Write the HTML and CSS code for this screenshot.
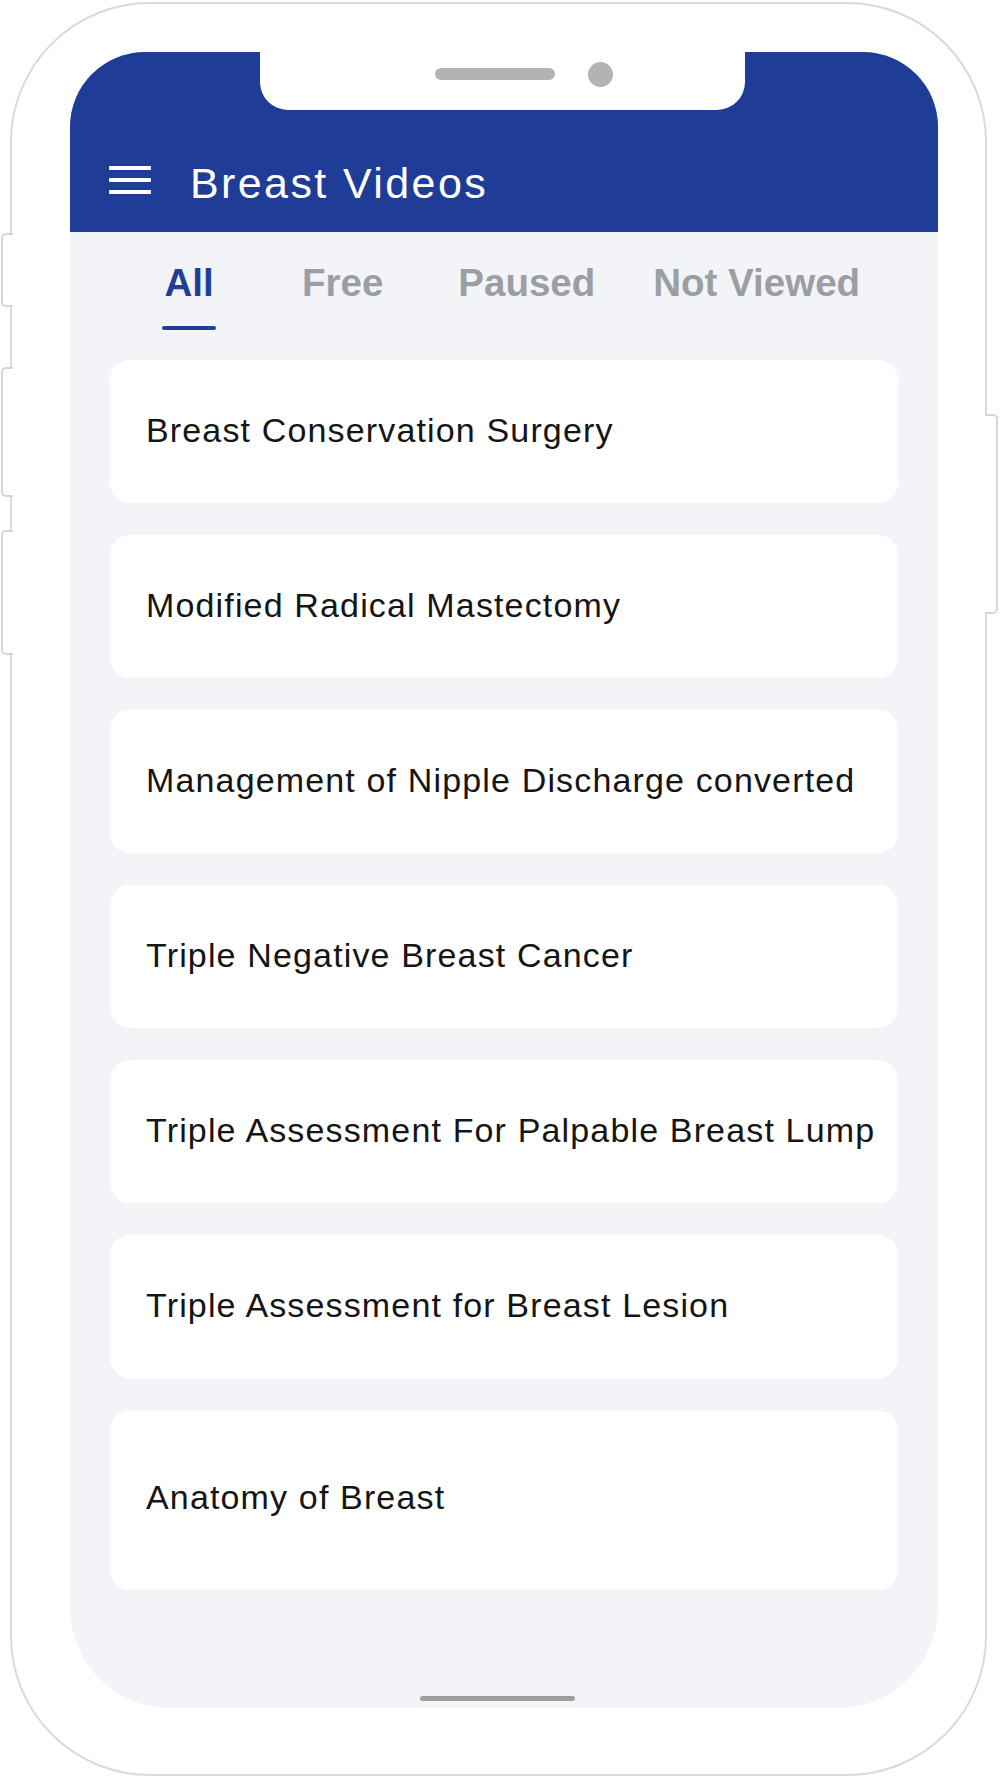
FILE: index.html
```html
<!DOCTYPE html>
<html lang="en">
<head>
<meta charset="utf-8">
<title>Breast Videos</title>
<link rel="stylesheet" href="styles.css">
</head>
<body>
<div class="phone">
  <div class="side-btn btn-l1"></div>
  <div class="side-btn btn-l2"></div>
  <div class="side-btn btn-l3"></div>
  <div class="side-btn btn-r1"></div>
  <div class="screen">
    <div class="notch">
      <span class="speaker"></span>
      <span class="camera"></span>
    </div>
    <header class="appbar">
      <svg class="menu-icon" width="42" height="28" viewBox="0 0 42 28" aria-hidden="true">
        <rect x="0" y="0" width="42" height="4" rx="1" fill="#ffffff"/>
        <rect x="0" y="12" width="42" height="4" rx="1" fill="#ffffff"/>
        <rect x="0" y="24" width="42" height="4" rx="1" fill="#ffffff"/>
      </svg>
      <h1 class="title">Breast Videos</h1>
    </header>
    <nav class="tabs">
      <div class="tab tab-all active"><span class="tab-label">All</span><span class="tab-line"></span></div>
      <div class="tab tab-free"><span class="tab-label">Free</span><span class="tab-line"></span></div>
      <div class="tab tab-paused"><span class="tab-label">Paused</span><span class="tab-line"></span></div>
      <div class="tab tab-nv"><span class="tab-label">Not Viewed</span><span class="tab-line"></span></div>
    </nav>
    <main class="list">
      <div class="card">Breast Conservation Surgery</div>
      <div class="card">Modified Radical Mastectomy</div>
      <div class="card">Management of Nipple Discharge converted</div>
      <div class="card">Triple Negative Breast Cancer</div>
      <div class="card">Triple Assessment For Palpable Breast Lump</div>
      <div class="card">Triple Assessment for Breast Lesion</div>
      <div class="card card-last">Anatomy of Breast</div>
    </main>
    <div class="home-indicator"></div>
  </div>
</div>
</body>
</html>
```

FILE: styles.css
```css
* {
  box-sizing: border-box;
}

html, body {
  margin: 0;
  padding: 0;
  background: #ffffff;
}

body {
  width: 1000px;
  height: 1778px;
  overflow: hidden;
  font-family: "Liberation Sans", Arial, sans-serif;
}

.phone {
  position: relative;
  margin: 2px 0 0 10px;
  width: 977px;
  height: 1774px;
  border: 2px solid #dadada;
  border-radius: 140px;
  padding: 48px 47px 0 58px;
  background: #ffffff;
}

.side-btn {
  position: absolute;
  background: #ffffff;
  border: 2px solid #d6d6d6;
}

.btn-l1,
.btn-l2,
.btn-l3 {
  left: -11px;
  width: 12px;
  border-right: none;
  border-radius: 5px 0 0 5px;
}

.btn-l1 { top: 229px; height: 74px; }
.btn-l2 { top: 363px; height: 130px; }
.btn-l3 { top: 526px; height: 125px; }

.btn-r1 {
  right: -13px;
  top: 410px;
  width: 13px;
  height: 200px;
  border-left: none;
  border-radius: 0 5px 5px 0;
}

.screen {
  position: relative;
  height: 1656px;
  background: #f3f4f8;
  border-radius: 75px 75px 100px 100px;
  overflow: hidden;
  display: flex;
  flex-direction: column;
}

.notch {
  position: absolute;
  top: 0;
  left: 190px;
  width: 485px;
  height: 58px;
  background: #ffffff;
  border-radius: 0 0 28px 28px;
  display: flex;
  align-items: flex-start;
  gap: 33px;
  padding: 10px 0 0 175px;
}

.speaker {
  display: block;
  width: 120px;
  height: 12px;
  margin-top: 6px;
  border-radius: 6px;
  background: #b3b3b3;
}

.camera {
  display: block;
  width: 25px;
  height: 25px;
  border-radius: 50%;
  background: #b3b3b3;
}

.appbar {
  height: 180px;
  flex: none;
  background: #1f3d97;
  display: flex;
  align-items: center;
  padding: 76px 0 0 39px;
}

.menu-icon {
  display: block;
  flex: none;
}

.title {
  margin: 7px 0 0 39px;
  font-size: 43px;
  line-height: 43px;
  font-weight: 400;
  letter-spacing: 2.4px;
  color: #ffffff;
}

.tabs {
  display: flex;
  align-items: flex-start;
  padding: 32px 0 0 92px;
  flex: none;
}

.tab {
  display: flex;
  flex-direction: column;
  align-items: center;
}

.tab-label {
  font-size: 38.5px;
  line-height: 38px;
  font-weight: 700;
  color: #9c9ea3;
  white-space: nowrap;
}

.tab-line {
  display: block;
  margin-top: 24px;
  width: 54px;
  height: 4px;
  border-radius: 2px;
  background: transparent;
}

.tab.active .tab-label {
  color: #213f99;
}

.tab.active .tab-line {
  background: #213f99;
}

.tab-free { margin-left: 86px; }
.tab-paused { margin-left: 75px; }
.tab-nv { margin-left: 58px; }

.tab-free .tab-line,
.tab-paused .tab-line,
.tab-nv .tab-line {
  width: 0;
}

.list {
  display: flex;
  flex-direction: column;
  gap: 32px;
  padding: 0 40px;
  margin-top: 30px;
  flex: none;
}

.card {
  height: 143px;
  background: #ffffff;
  border-radius: 20px;
  display: flex;
  align-items: center;
  padding: 0 20px 4px 36px;
  font-size: 34px;
  line-height: 34px;
  letter-spacing: 1.15px;
  color: #151515;
  white-space: nowrap;
}

.card-last {
  height: 180px;
  padding-bottom: 6px;
}

.home-indicator {
  margin-top: auto;
  margin-bottom: 7px;
  margin-left: 350px;
  align-self: flex-start;
  width: 155px;
  height: 5px;
  border-radius: 3px;
  background: #9d9d9d;
  flex: none;
}
```
